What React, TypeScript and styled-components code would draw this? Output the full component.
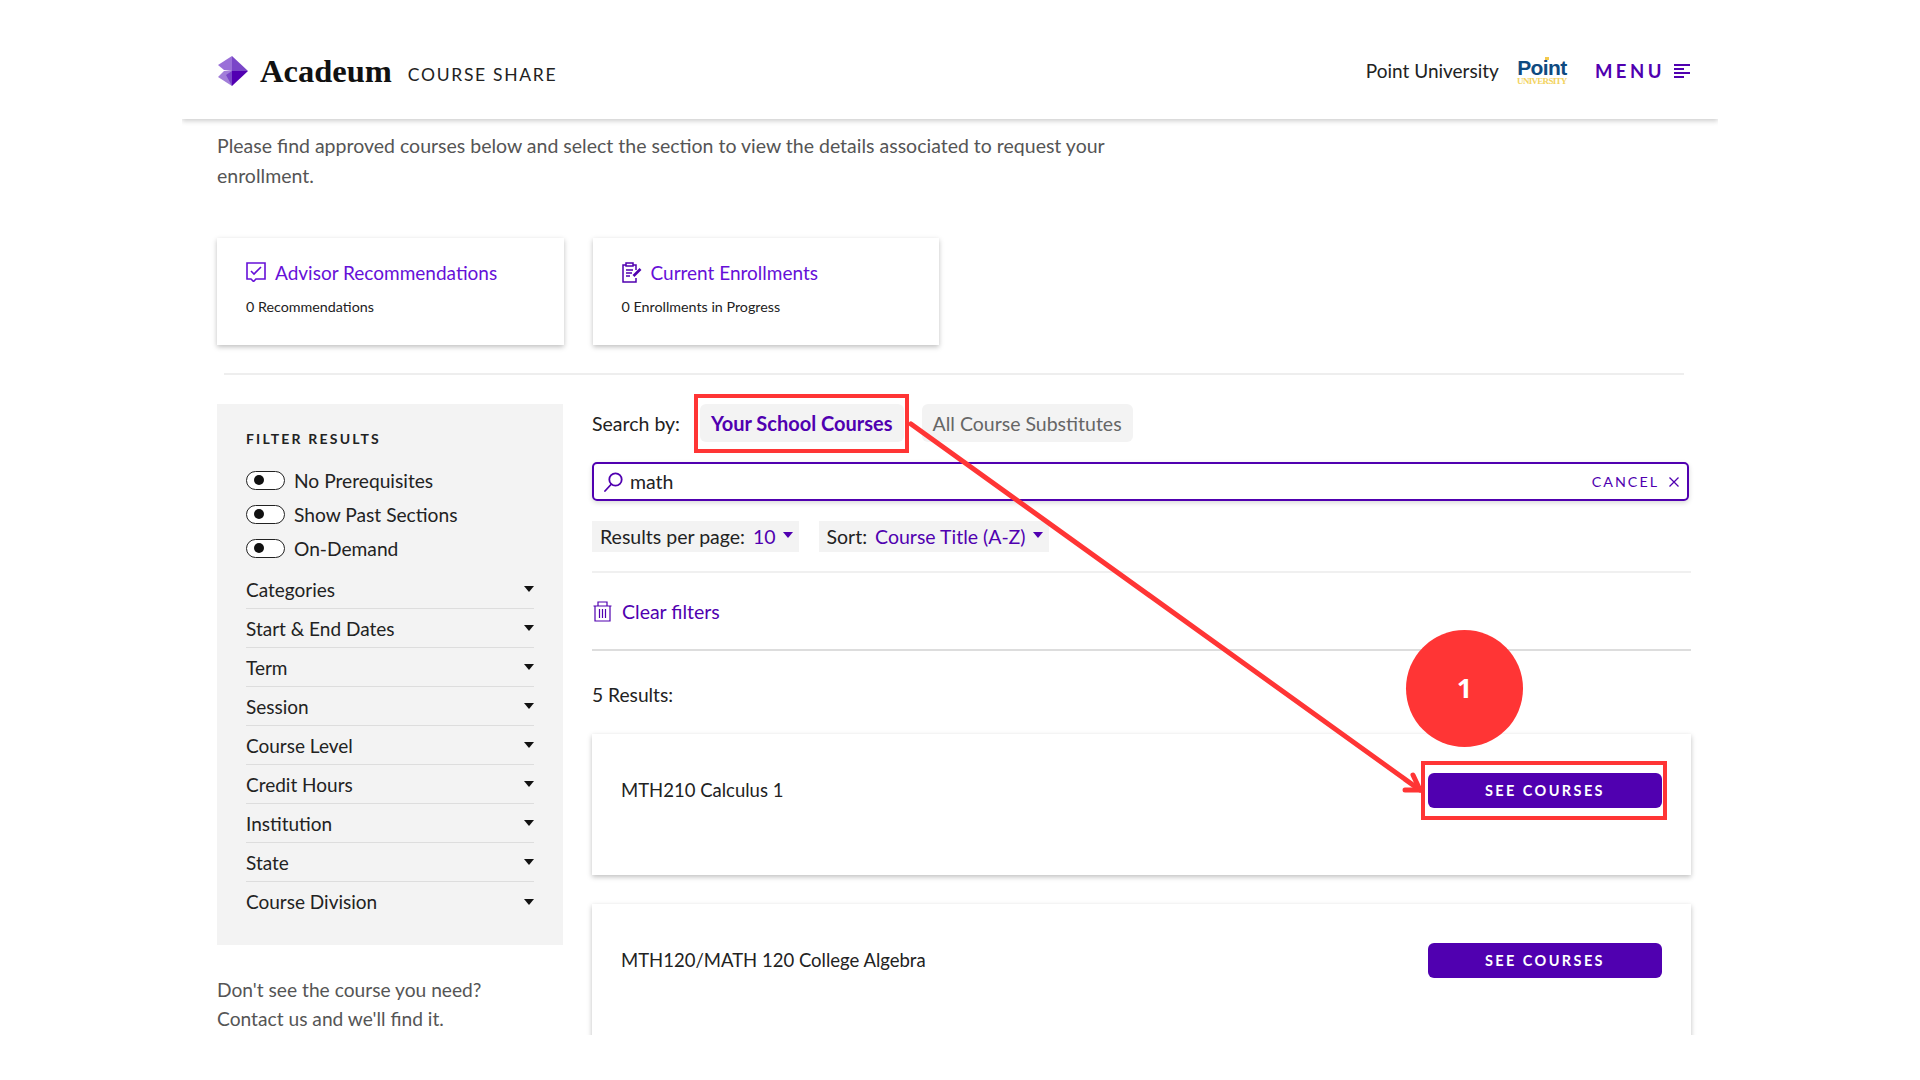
import React from "react";
import styled, { createGlobalStyle } from "styled-components";

const PURPLE = "#5000b0";
const LINK = "#6610d8";
const RED = "#ff3535";

const Global = createGlobalStyle`
  html, body { margin: 0; padding: 0; background: #fff; }
  body { font-family: Lato, "Open Sans", sans-serif; color: #222; }
  * { box-sizing: border-box; }
`;

const Frame = styled.div`
  position: relative;
  width: 1536px;
  height: 1035px;
  margin-left: 182px;
  overflow: hidden;
`;

const Overlay = styled.div`
  position: fixed;
  inset: 0;
  pointer-events: none;
`;

const Header = styled.header`
  height: 119px;
  padding: 22px 28px 0 36px;
  display: flex;
  align-items: center;
  justify-content: space-between;
  box-shadow: 0 2px 5px rgba(0, 0, 0, 0.2);
`;

const Brand = styled.div`
  display: flex;
  align-items: center;
`;

const Wordmark = styled.span`
  margin-left: 12px;
  margin-top: 2px;
  font-family: "Liberation Serif", serif;
  font-weight: 700;
  font-size: 32.5px;
  color: #111;
  line-height: 1;
`;

const Product = styled.span`
  margin-left: 16px;
  margin-top: 8px;
  font-size: 17.5px;
  letter-spacing: 1.7px;
  color: #222;
`;

const HeaderRight = styled.div`
  display: flex;
  align-items: center;
`;

const School = styled.span`
  font-size: 19px;
  color: #222;
`;

const SchoolLogo = styled.div`
  position: relative;
  margin-left: 18px;
  width: 50px;
  display: flex;
  flex-direction: column;
  align-items: center;
`;

const SchoolName = styled.span`
  margin-top: 2px;
  font-family: "Liberation Sans", sans-serif;
  font-weight: 700;
  font-size: 21px;
  line-height: 19px;
  letter-spacing: -0.6px;
  color: #0f4a80;
  &::after {
    content: "";
    position: absolute;
    left: 28px;
    top: 1px;
    width: 4px;
    height: 3px;
    background: #f3c94e;
  }
`;

const SchoolSub = styled.span`
  margin-top: 1px;
  font-family: "Liberation Serif", serif;
  font-weight: 700;
  font-size: 9px;
  line-height: 7px;
  letter-spacing: -0.7px;
  color: #f3d35e;
`;

const Menu = styled.span`
  margin-left: 28px;
  font-size: 18.5px;
  font-weight: 700;
  letter-spacing: 3.5px;
  color: ${PURPLE};
`;

const MenuIcon = styled.svg`
  margin-left: 9px;
  width: 16px;
  height: 16px;
  display: block;
`;

const Content = styled.main`
  padding: 0 26px 0 35px;
`;

const Intro = styled.p`
  margin: 12px 0 0;
  width: 920px;
  font-size: 19.5px;
  line-height: 30px;
  color: #555;
`;

const Cards = styled.div`
  display: flex;
  gap: 29px;
  margin-top: 47px;
`;

const StatCard = styled.div`
  width: 346.5px;
  height: 107px;
  padding: 21px 29px;
  background: #fff;
  box-shadow: 0 2px 5px rgba(0, 0, 0, 0.25);
`;

const StatTitle = styled.div`
  display: flex;
  align-items: center;
  gap: 9px;
  height: 26px;
  font-size: 19px;
  color: ${LINK};
`;

const IconSvg = styled.svg`
  display: block;
  flex: none;
`;

const StatSub = styled.div`
  margin-top: 12px;
  font-size: 14.3px;
  line-height: 20px;
  color: #222;
`;

const Divider = styled.hr`
  margin: 28px 8px 29px 7px;
  border: 0;
  height: 2px;
  background: #eee;
`;

const Columns = styled.div`
  display: flex;
  gap: 29px;
  align-items: flex-start;
`;

const Left = styled.aside`
  width: 346px;
  flex: none;
`;

const Sidebar = styled.div`
  height: 541px;
  padding: 27px 29px 0;
  background: #f3f3f3;
`;

const FilterTitle = styled.div`
  font-size: 14px;
  font-weight: 700;
  letter-spacing: 2.2px;
  line-height: 16px;
  color: #222;
`;

const Toggles = styled.div`
  margin-top: 16px;
  display: flex;
  flex-direction: column;
`;

const ToggleRow = styled.div`
  height: 34px;
  display: flex;
  align-items: center;
  gap: 9px;
  font-size: 19.2px;
`;

const Toggle = styled.span`
  position: relative;
  width: 39px;
  height: 19px;
  border: 1.5px solid #222;
  border-radius: 10px;
  background: #fff;
  &::before {
    content: "";
    position: absolute;
    left: 7px;
    top: 3px;
    width: 10px;
    height: 10px;
    border-radius: 50%;
    background: #111;
  }
`;

const Accordion = styled.div`
  margin-top: 5px;
`;

const AccordionRow = styled.div`
  height: 39px;
  display: flex;
  align-items: center;
  justify-content: space-between;
  font-size: 19px;
  border-bottom: 1.5px solid #ddd;
  &:last-child {
    border-bottom: 0;
  }
`;

const Caret = styled.span<{ $color?: string }>`
  width: 0;
  height: 0;
  border-left: 5px solid transparent;
  border-right: 5px solid transparent;
  border-top: 6px solid ${(p) => p.$color ?? "#111"};
`;

const Help = styled.p`
  margin: 30px 0 0;
  font-size: 19.2px;
  line-height: 29px;
  color: #555;
`;

const Right = styled.section`
  width: 1099px;
  flex: none;
`;

const SearchBy = styled.div`
  display: flex;
  align-items: center;
  height: 38px;
  font-size: 19.5px;
`;

const SearchLabel = styled.span`
  width: 108px;
`;

const Pill = styled.span<{ $active?: boolean }>`
  height: 38px;
  padding: 0 11px;
  display: flex;
  align-items: center;
  border-radius: 6px;
  background: #f3f3f3;
  font-size: ${(p) => (p.$active ? "20px" : "19.5px")};
  font-weight: ${(p) => (p.$active ? 700 : 400)};
  color: ${(p) => (p.$active ? PURPLE : "#666")};
  margin-right: 18px;
`;

const SearchBox = styled.div`
  margin-top: 20px;
  width: 1097px;
  height: 39px;
  padding: 0 7px 0 10px;
  display: flex;
  align-items: center;
  border: 2px solid ${PURPLE};
  border-radius: 5px;
  box-shadow: 0 2px 5px rgba(0, 0, 0, 0.15);
  font-size: 19.5px;
`;

const SearchText = styled.span`
  margin-left: 7px;
  flex: 1;
`;

const Cancel = styled.span`
  font-size: 14.3px;
  letter-spacing: 2px;
  color: ${PURPLE};
`;

const CancelIcon = styled.svg`
  margin-left: 9px;
  width: 12px;
  height: 12px;
  display: block;
`;

const Selects = styled.div`
  margin-top: 20px;
  display: flex;
  gap: 20px;
`;

const Select = styled.div`
  height: 31px;
  padding: 0 6px 0 8px;
  display: flex;
  align-items: center;
  background: #f3f3f3;
  font-size: 19.5px;
`;

const SelectValue = styled.span`
  margin-left: 8px;
  margin-right: 7px;
  color: ${PURPLE};
`;

const SelectCaret = styled(Caret)`
  margin-top: -4px;
`;

const Rule = styled.hr<{ $color: string; $top?: number }>`
  margin: ${(p) => p.$top ?? 0}px 0 0;
  border: 0;
  height: 2px;
  background: ${(p) => p.$color};
`;

const ClearRow = styled.div`
  height: 76px;
  padding-left: 1px;
  display: flex;
  align-items: center;
  gap: 10px;
  font-size: 19.5px;
  color: ${PURPLE};
`;

const Count = styled.div`
  margin-top: 32px;
  height: 24px;
  line-height: 24px;
  font-size: 19.2px;
`;

const CourseCard = styled.div`
  height: 141px;
  margin-top: 27px;
  padding: 39px 29px 0;
  display: flex;
  align-items: flex-start;
  justify-content: space-between;
  background: #fff;
  box-shadow: 0 2px 5px rgba(0, 0, 0, 0.25);
  font-size: 18.5px;
  & + & {
    margin-top: 29px;
    height: 170px;
  }
`;

const CourseName = styled.span`
  line-height: 35px;
`;

const SeeButton = styled.button`
  width: 234px;
  height: 35px;
  border: 0;
  border-radius: 6px;
  background: ${PURPLE};
  color: #fff;
  font-family: inherit;
  font-weight: 700;
  font-size: 14.5px;
  letter-spacing: 2.4px;
`;

const Mark = styled.div<{ $x: number; $y: number; $w: number; $h: number }>`
  position: absolute;
  left: ${(p) => p.$x}px;
  top: ${(p) => p.$y}px;
  width: ${(p) => p.$w}px;
  height: ${(p) => p.$h}px;
  border: 4px solid ${RED};
`;

const Badge = styled.div`
  position: absolute;
  left: 1406px;
  top: 630px;
  width: 117px;
  height: 117px;
  padding-bottom: 2px;
  border-radius: 50%;
  background: ${RED};
  display: flex;
  align-items: center;
  justify-content: center;
  color: #fff;
  font-family: "Open Sans", sans-serif;
  font-weight: 700;
  font-size: 27px;
`;

const ArrowSvg = styled.svg`
  position: absolute;
  left: 0;
  top: 0;
  width: 1920px;
  height: 1080px;
`;

const Logo = () => (
  <IconSvg width="30" height="30" viewBox="0 0 30 30">
    <polygon points="14,0 30,15 14,15" fill="#7a46c8" />
    <polygon points="14,15 30,15 14,30" fill="#5200b2" />
    <polygon points="14,0 14,15 6,14 0,9" fill="#9a70d8" />
    <polygon points="14,15 14,30 0,21 6,15" fill="#a27ed9" />
    <polygon points="14,15 14,30 8,19" fill="#7a46c8" />
  </IconSvg>
);

const AdvisorIcon = () => (
  <IconSvg width="20" height="20" viewBox="0 0 20 20" fill="none" stroke={LINK} strokeWidth="1.6">
    <path d="M1 1h18v16H10l-2.5 2.5L5 17H1z" />
    <path d="M5 9l3 3 7-7" />
  </IconSvg>
);

const ClipboardIcon = () => (
  <IconSvg width="20" height="21" viewBox="0 0 20 21" fill="none" stroke={PURPLE} strokeWidth="1.5">
    <path d="M4 3H1v17h13v-4M11 3h3v5" />
    <rect x="4" y="1" width="7" height="3" />
    <path d="M4 8h7M4 11h6M4 14h4" />
    <path d="M11.5 14L18.5 7" strokeWidth="2.6" />
  </IconSvg>
);

const SearchIcon = () => (
  <IconSvg width="19" height="20" viewBox="0 0 19 20" fill="none" stroke={PURPLE} strokeWidth="1.8">
    <circle cx="11.5" cy="7.5" r="6.2" />
    <path d="M7 12.5L1 19" strokeLinecap="round" />
  </IconSvg>
);

const TrashIcon = () => (
  <IconSvg width="19" height="21" viewBox="0 0 19 21" fill="none" stroke={PURPLE} strokeWidth="1.2">
    <path d="M0.5 5h18M5 5V1h9v4M2 5v15h15V5M6.5 8v9M9.5 8v9M12.5 8v9" />
  </IconSvg>
);

const filters = ["Categories", "Start & End Dates", "Term", "Session", "Course Level", "Credit Hours", "Institution", "State", "Course Division"];
const toggles = ["No Prerequisites", "Show Past Sections", "On-Demand"];

export default function App() {
  return (
    <>
      <Global />
      <Frame>
        <Header>
          <Brand>
            <Logo />
            <Wordmark>Acadeum</Wordmark>
            <Product>COURSE SHARE</Product>
          </Brand>
          <HeaderRight>
            <School>Point University</School>
            <SchoolLogo>
              <SchoolName>Point</SchoolName>
              <SchoolSub>UNIVERSITY</SchoolSub>
            </SchoolLogo>
            <Menu>MENU</Menu>
            <MenuIcon viewBox="0 0 16 16" fill="none" stroke={PURPLE} strokeWidth="2">
              <path d="M0 2h16M0 6h10M0 10h16M0 14h10" />
            </MenuIcon>
          </HeaderRight>
        </Header>
        <Content>
          <Intro>Please find approved courses below and select the section to view the details associated to request your enrollment.</Intro>
          <Cards>
            <StatCard>
              <StatTitle><AdvisorIcon />Advisor Recommendations</StatTitle>
              <StatSub>0 Recommendations</StatSub>
            </StatCard>
            <StatCard>
              <StatTitle><ClipboardIcon />Current Enrollments</StatTitle>
              <StatSub>0 Enrollments in Progress</StatSub>
            </StatCard>
          </Cards>
          <Divider />
          <Columns>
            <Left>
              <Sidebar>
                <FilterTitle>FILTER RESULTS</FilterTitle>
                <Toggles>
                  {toggles.map((t) => (
                    <ToggleRow key={t}><Toggle />{t}</ToggleRow>
                  ))}
                </Toggles>
                <Accordion>
                  {filters.map((f) => (
                    <AccordionRow key={f}>{f}<Caret /></AccordionRow>
                  ))}
                </Accordion>
              </Sidebar>
              <Help>Don't see the course you need?<br />Contact us and we'll find it.</Help>
            </Left>
            <Right>
              <SearchBy>
                <SearchLabel>Search by:</SearchLabel>
                <Pill $active>Your School Courses</Pill>
                <Pill>All Course Substitutes</Pill>
              </SearchBy>
              <SearchBox>
                <SearchIcon />
                <SearchText>math</SearchText>
                <Cancel>CANCEL</Cancel>
                <CancelIcon viewBox="0 0 12 12" fill="none" stroke={PURPLE} strokeWidth="1.3">
                  <path d="M1.5 1.5l9 9M10.5 1.5l-9 9" />
                </CancelIcon>
              </SearchBox>
              <Selects>
                <Select>Results per page:<SelectValue>10</SelectValue><SelectCaret $color={PURPLE} /></Select>
                <Select>Sort:<SelectValue>Course Title (A-Z)</SelectValue><SelectCaret $color={PURPLE} /></Select>
              </Selects>
              <Rule $color="#f0f0f0" $top={19} />
              <ClearRow><TrashIcon />Clear filters</ClearRow>
              <Rule $color="#ddd" />
              <Count>5 Results:</Count>
              <CourseCard>
                <CourseName>MTH210 Calculus 1</CourseName>
                <SeeButton>SEE COURSES</SeeButton>
              </CourseCard>
              <CourseCard>
                <CourseName>MTH120/MATH 120 College Algebra</CourseName>
                <SeeButton>SEE COURSES</SeeButton>
              </CourseCard>
            </Right>
          </Columns>
        </Content>
      </Frame>
      <Overlay>
        <Mark $x={694} $y={394} $w={215} $h={59} />
        <Mark $x={1421} $y={761} $w={246} $h={59} />
        <Badge>1</Badge>
        <ArrowSvg viewBox="0 0 1920 1080" fill="none" stroke={RED} strokeWidth="5" strokeLinecap="round">
          <path d="M911 424L1420 790" />
          <path d="M1405 790L1420 790L1413 775" />
        </ArrowSvg>
      </Overlay>
    </>
  );
}
